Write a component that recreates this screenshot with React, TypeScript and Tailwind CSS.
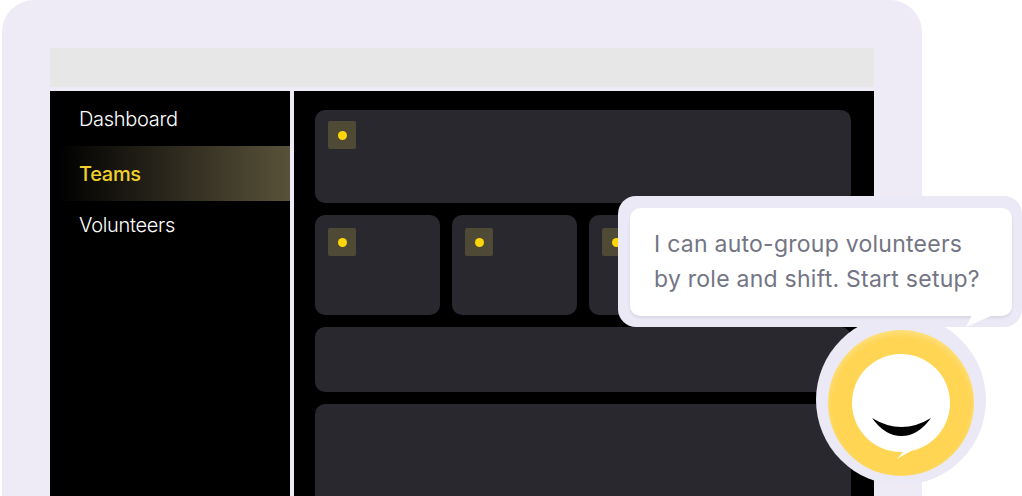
import React from 'react';

const navFont = "font-['Inter','Liberation_Sans',sans-serif]";

function Chip(): React.JSX.Element {
  return (
    <div className="flex h-[28px] w-[28px] items-center justify-center rounded-[2px] bg-[#4f4a36]">
      <span className="h-[9px] w-[9px] rounded-full bg-[#ffd60a]"></span>
    </div>
  );
}

function SmallCard(): React.JSX.Element {
  return (
    <div className="h-[100px] w-[125px] shrink-0 rounded-[10px] bg-[#29282e] pl-[13px] pt-[13px]">
      <Chip />
    </div>
  );
}

function Sidebar(): React.JSX.Element {
  return (
    <div className={`h-full w-[240px] shrink-0 bg-black ${navFont} text-[20px] font-light tracking-[-0.3px] text-white`}>
      <div className="flex h-[55px] items-center pl-[29px]">Dashboard</div>
      <div className="flex h-[55px] items-center bg-[linear-gradient(90deg,#000_3%,#59523a_100%)] pl-[29px] font-medium text-[#f0d02a]">
        Teams
      </div>
      <div className="flex h-[50px] items-center pb-[2px] pl-[29px]">Volunteers</div>
    </div>
  );
}

function Assistant(): React.JSX.Element {
  return (
    <>
      <div className="absolute left-[816px] top-[315px] flex h-[170px] w-[170px] justify-center rounded-full bg-[#ebe9f5] pt-[15px]">
        <div className="relative h-[146px] w-[146px] rounded-full bg-[#ffd553] shadow-[inset_0_3px_6px_rgba(255,255,255,0.3)]">
          <svg width="98" height="112" viewBox="0 0 98 112" className="absolute left-[24px] top-[24px]">
            <circle cx="49" cy="49" r="49" fill="#fff" />
            <path d="M73 89C62 95 54 100 45 105l6-7z" fill="#fff" />
            <path d="M20 64Q49.500 82 79 64 66 82 49.500 82 33 82 20 64z" fill="#000" />
          </svg>
        </div>
      </div>
      <div className="absolute left-[618px] top-[196px] h-[131px] w-[404px] rounded-[18px] bg-[#ebe9f5] p-[12px] pr-[10px]">
        <div className="h-[108px] w-[382px] rounded-[10px] bg-white pl-[24px] pt-[19px] font-['Inter','Liberation_Sans',sans-serif] text-[23px] leading-[35px] tracking-[0.25px] text-[#737584] shadow-[0_2px_3px_rgba(60,50,110,0.1)]">
          <div>I can auto-group volunteers</div>
          <div>by role and shift. Start setup?</div>
        </div>
        <svg width="32" height="13" viewBox="0 0 32 13" className="absolute left-[348px] top-[119px]">
          <path d="M6 0 0 12 27 0z" fill="#fff" />
        </svg>
      </div>
    </>
  );
}

export default function App(): React.JSX.Element {
  return (
    <div className="relative h-[496px] w-[1022px] overflow-hidden bg-white">
      <div className="ml-[2px] h-[496px] w-[920px] rounded-t-[32px] bg-[#eeebf6] pl-[48px] pr-[48px] pt-[48px]">
        <div className="h-[39px] bg-[#e7e7e7]"></div>
        <div className="mt-[4px] flex h-[405px]">
          <Sidebar />
          <div className="ml-[4px] flex-1 bg-black pl-[21px] pr-[23px] pt-[19px]">
            <div className="flex flex-col gap-[12px]">
              <div className="h-[93px] rounded-[10px] bg-[#29282e] pl-[13px] pt-[11px]">
                <Chip />
              </div>
              <div className="flex gap-[12px]">
                <SmallCard />
                <SmallCard />
                <SmallCard />
              </div>
              <div className="h-[65px] rounded-[10px] bg-[#29282e]"></div>
              <div className="h-[120px] rounded-[10px] bg-[#29282e]"></div>
            </div>
          </div>
        </div>
      </div>
      <Assistant />
    </div>
  );
}
